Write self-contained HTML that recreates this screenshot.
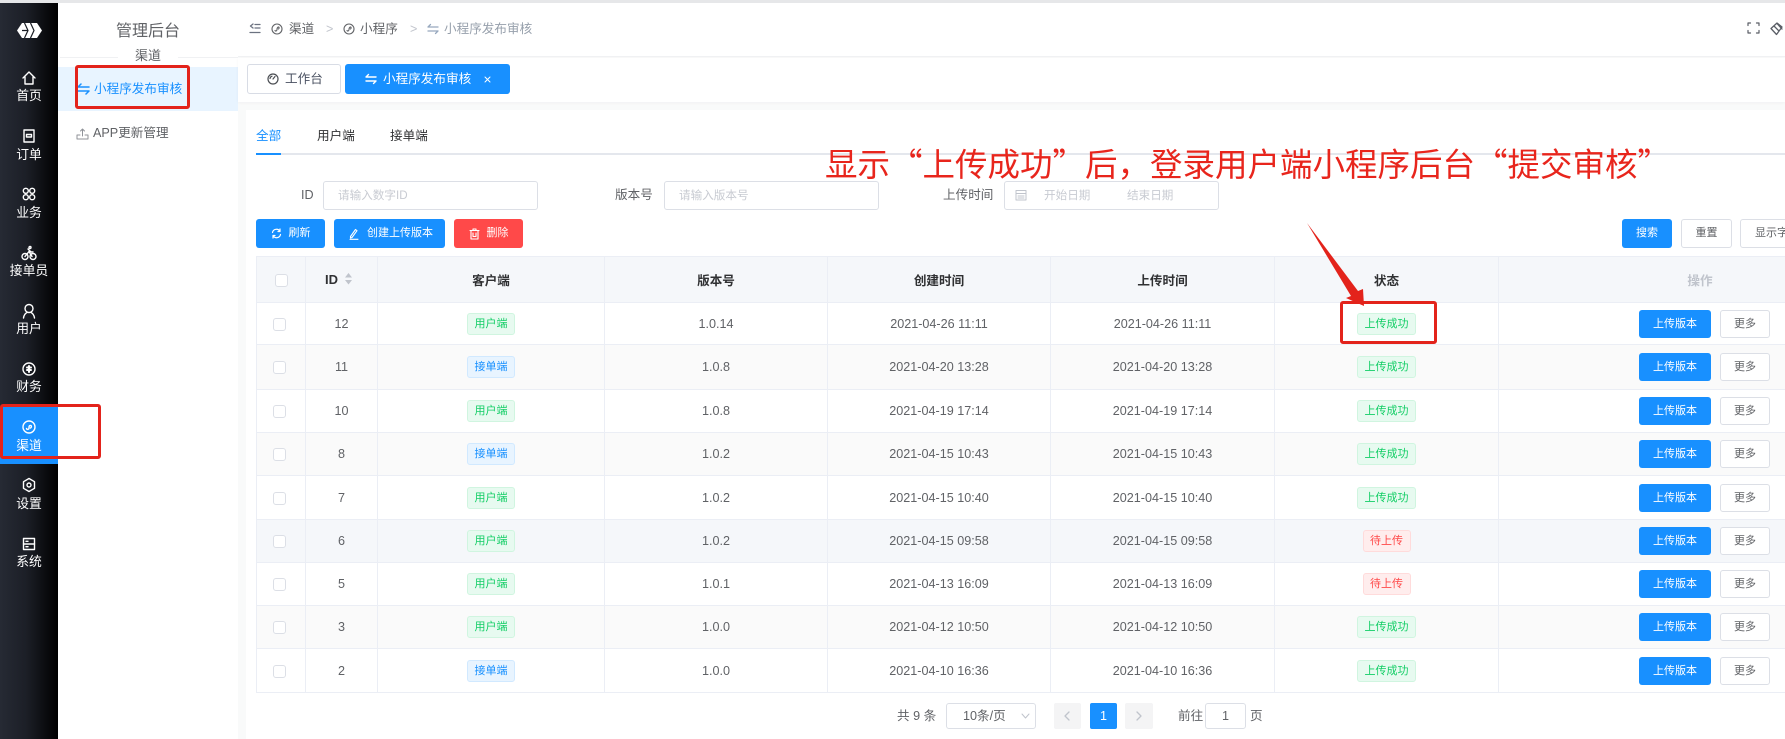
<!DOCTYPE html>
<html lang="zh-CN">
<head>
<meta charset="utf-8">
<title>小程序发布审核</title>
<style>
*{box-sizing:border-box}
html,body{margin:0;padding:0;width:1785px;height:739px;overflow:hidden;background:#fff}
body{position:relative;font-family:"Liberation Sans","Noto Sans CJK SC",sans-serif;font-size:12.6px;color:#606266}
.a{position:absolute}
.t{position:absolute;white-space:nowrap;line-height:20px}
.c{text-align:center}
svg{position:absolute;display:block;fill:none;stroke:currentColor;stroke-linecap:round;stroke-linejoin:round}
#side{left:0;top:3px;width:58px;height:736px;background:linear-gradient(90deg,#262a34 0%,#1c1f27 45%,#000 100%)}
.lbl{position:absolute;left:0;width:58px;text-align:center;color:#fff;font-size:12.8px;line-height:20px}
.ic{color:#fff;left:21px;stroke-width:1.4}
.btn{position:absolute;top:219px;height:29px;border-radius:3px;font-size:11px;line-height:29px;text-align:center;color:#fff;background:#1890ff;white-space:nowrap}
.btn.p{background:#fff;border:1px solid #dcdfe6;color:#606266;line-height:27px}
.inp{position:absolute;top:181px;height:29px;border:1px solid #dcdfe6;border-radius:3px;background:#fff}
.ph{position:absolute;color:#c8cbd2;font-size:11.6px;line-height:20px;white-space:nowrap}
table{position:absolute;left:256px;top:256px;width:1645px;border-collapse:collapse;table-layout:fixed;border-top:1px solid #ebeef5;border-left:1px solid #ebeef5}
th,td{border-right:1px solid #ebeef5;border-bottom:1px solid #ebeef5;padding:0;text-align:center;vertical-align:middle;font-size:12.6px;white-space:nowrap}
th{background:#f5f7fa;color:#303133;font-weight:700;height:46px}
td{color:#606266}
tr.s td{background:#fafafa}
tr.h td{background:#f5f7fa}
.cb{display:inline-block;width:13px;height:13px;border:1px solid #dcdfe6;border-radius:3px;background:#fff;vertical-align:middle;position:relative}
.hc{left:0}
.rc{left:-2px}
.tag{display:inline-block;height:22px;line-height:20px;padding:0 6.5px;border-radius:3px;font-size:11px;border:1px solid;vertical-align:middle}
.g{background:#e7faf0;border-color:#d0f5e0;color:#13ce66}
.b{background:#e8f4ff;border-color:#d1e9ff;color:#1890ff}
.r{background:#ffeded;border-color:#ffdbdb;color:#ff4949}
td.op{text-align:left;padding-left:140px}
.m1,.m2{display:inline-block;height:28px;border-radius:3px;font-size:11px;line-height:28px;text-align:center;vertical-align:middle}
.m1{width:72px;background:#1890ff;color:#fff}
.m2{width:50px;margin-left:9px;background:#fff;border:1px solid #dcdfe6;color:#606266;line-height:26px}
</style>
</head>
<body>
<div class="a" style="left:0;top:0;width:1785px;height:3px;background:#e6e7e9"></div>

<!-- icon rail -->
<div id="side" class="a"></div>
<svg style="left:17px;top:23px" width="25" height="15" viewBox="0 0 25 15">
<path d="M5 0H20L25 7.500L20 15H5L0 7.500Z" fill="#fff" stroke="none"/>
<path d="M7.500 0L11 7.500L7.500 15M13.500 0L17 7.500L13.500 15M11 7.500H5" stroke="#1a1d24" stroke-width="1.2" stroke-linecap="butt"/>
</svg>

<svg class="ic" style="top:70px" width="16" height="16" viewBox="0 0 16 16"><path d="M2 8L8 2L14 8M4 7V14H12V7"/></svg>
<div class="lbl" style="top:86px">首页</div>
<svg class="ic" style="top:128px" width="16" height="16" viewBox="0 0 16 16"><rect x="3" y="2" width="10" height="12"/><path d="M5.500 6.500H10.500V9H5.500Z"/></svg>
<div class="lbl" style="top:145px">订单</div>
<svg class="ic" style="top:186px" width="16" height="16" viewBox="0 0 16 16"><circle cx="4.800" cy="4.800" r="2.500"/><circle cx="11.200" cy="4.800" r="2.500"/><circle cx="4.800" cy="11.200" r="2.500"/><circle cx="11.200" cy="11.200" r="2.500"/></svg>
<div class="lbl" style="top:203px">业务</div>
<svg class="ic" style="top:245px" width="16" height="16" viewBox="0 0 16 16"><circle cx="4" cy="11.500" r="3"/><circle cx="12" cy="11.500" r="3"/><path d="M4 11.500L8 6.500L11 11.500M7 4L10 7H12"/><circle cx="9" cy="2.500" r="1"/></svg>
<div class="lbl" style="top:261px">接单员</div>
<svg class="ic" style="top:303px" width="16" height="16" viewBox="0 0 16 16"><circle cx="8" cy="5.500" r="4"/><path d="M2.500 15C3 11.500 5 10 6 9.500M13.500 15C13 11.500 11 10 10 9.500"/></svg>
<div class="lbl" style="top:319px">用户</div>
<svg class="ic" style="top:361px" width="16" height="16" viewBox="0 0 16 16"><circle cx="8" cy="8" r="6"/><path d="M6 6.500H10M6 9H10M8 5V11" stroke-width="2"/></svg>
<div class="lbl" style="top:377px">财务</div>

<div class="a" style="left:0;top:407px;width:58px;height:57px;background:#1890ff"></div>
<svg class="ic" style="top:419px" width="16" height="16" viewBox="0 0 16 16"><circle cx="8" cy="8" r="6"/><path d="M5.500 9.500C6 11 8 10.500 8 9C8 7.500 8 7 9 6.500C10.500 6 11 8 9.500 9"/></svg>
<div class="lbl" style="top:436px">渠道</div>

<svg class="ic" style="top:477px" width="16" height="16" viewBox="0 0 16 16"><path d="M8 1.500L13.500 4.700V11.300L8 14.500L2.500 11.300V4.700Z"/><circle cx="8" cy="8" r="2"/></svg>
<div class="lbl" style="top:494px">设置</div>
<svg class="ic" style="top:536px" width="16" height="16" viewBox="0 0 16 16"><rect x="2.500" y="2.500" width="11" height="11"/><path d="M2.500 8H13.500M5 5.300H7M5 10.700H7"/></svg>
<div class="lbl" style="top:552px">系统</div>

<!-- second menu -->
<div class="a" style="left:58px;top:3px;width:180px;height:736px;background:#fff"></div>
<div class="a" style="left:60px;top:57px;width:178px;height:1px;background:#f0f1f3"></div>
<div class="t c" style="left:58px;width:180px;top:21px;font-size:16px;line-height:22px;color:#606266">管理后台</div>
<div class="t c" style="left:118px;width:60px;top:46px;font-size:13px;background:#fff;color:#606266">渠道</div>
<div class="a" style="left:58px;top:67px;width:180px;height:44px;background:#e8f4ff"></div>
<svg style="left:77px;top:83px;color:#1890ff;stroke-width:1.5" width="13" height="12" viewBox="0 0 13 12"><path d="M1 4H12M1 4L4 1M12 8H1M12 8L9 11"/></svg>
<div class="t" style="left:94px;top:79px;color:#1890ff">小程序发布审核</div>
<svg style="left:76px;top:127px;color:#909399;stroke-width:1" width="13" height="13" viewBox="0 0 13 13"><path d="M1 8V12H12V8H9M1 8H4M6.500 9V2M4.500 4L6.500 2L8.500 4"/></svg>
<div class="t" style="left:93px;top:123px">APP更新管理</div>

<!-- page background -->
<div class="a" style="left:238px;top:3px;width:1547px;height:736px;background:#f9fafa"></div>

<!-- top nav -->
<div class="a" style="left:238px;top:3px;width:1547px;height:54px;background:#fff;border-bottom:1px solid #f0f1f3"></div>
<svg style="left:249px;top:23px;color:#6b7280;stroke-width:1.3" width="12" height="11" viewBox="0 0 12 11"><path d="M4 1L1.500 3L4 5M6 1.500H11M6 5H11M1 9.500H11"/></svg>
<svg style="left:271px;top:23px;color:#606266;stroke-width:1.1" width="12" height="12" viewBox="0 0 12 12"><circle cx="6" cy="6" r="5"/><path d="M4 7.500C4.500 8.500 6 8 6 6.500C6 5 6.500 4.500 7.200 4C8.300 3.800 8.500 5.500 7.500 6"/></svg>
<div class="t" style="left:289px;top:19px;color:#606266">渠道</div>
<div class="t" style="left:326px;top:19px;color:#c0c4cc">&gt;</div>
<svg style="left:343px;top:23px;color:#606266;stroke-width:1.1" width="12" height="12" viewBox="0 0 12 12"><circle cx="6" cy="6" r="5"/><path d="M4 7.500C4.500 8.500 6 8 6 6.500C6 5 6.500 4.500 7.200 4C8.300 3.800 8.500 5.500 7.500 6"/></svg>
<div class="t" style="left:360px;top:19px;color:#606266">小程序</div>
<div class="t" style="left:410px;top:19px;color:#c0c4cc">&gt;</div>
<svg style="left:427px;top:23px;color:#97a8be;stroke-width:1.3" width="12" height="12" viewBox="0 0 12 12"><path d="M1 4H11M1 4L3.500 1.500M11 8H1M11 8L8.500 10.500"/></svg>
<div class="t" style="left:444px;top:19px;color:#97a0ac">小程序发布审核</div>
<svg style="left:1747px;top:22px;color:#5a5e66;stroke-width:1.2" width="13" height="12" viewBox="0 0 13 12"><path d="M1 3.500V1H3.500M9.500 1H12V3.500M12 8.500V11H9.500M3.500 11H1V8.500"/></svg>
<svg style="left:1770px;top:22px;color:#5a5e66;stroke-width:1.3" width="13" height="14" viewBox="0 0 13 14"><path d="M1 6.500L7 1L12 5L6.500 12.500ZM4 4L9 9M7 1.500L12 7"/></svg>

<!-- tags bar -->
<div class="a" style="left:238px;top:58px;width:1547px;height:44px;background:#fff;box-shadow:0 1px 3px rgba(0,21,41,.04)"></div>
<div class="a" style="left:247px;top:64px;width:94px;height:30px;background:#fff;border:1px solid #d8dce5;border-radius:3px"></div>
<svg style="left:267px;top:73px;color:#4a4d52;stroke-width:1.2" width="12" height="12" viewBox="0 0 12 12"><circle cx="6" cy="6" r="5"/><path d="M6 6L8 3.500M3 5.500C3.200 4.500 4 3.500 5 3.200"/></svg>
<div class="t" style="left:285px;top:69px;color:#495060">工作台</div>
<div class="a" style="left:345px;top:64px;width:165px;height:30px;background:#1890ff;border-radius:3px"></div>
<svg style="left:365px;top:73px;color:#fff;stroke-width:1.4" width="12" height="12" viewBox="0 0 12 12"><path d="M1 4H11M1 4L3.500 1.500M11 8H1M11 8L8.500 10.500"/></svg>
<div class="t" style="left:383px;top:69px;color:#fff">小程序发布审核</div>
<svg style="left:484px;top:76px;color:#fff;stroke-width:1" width="7" height="7" viewBox="0 0 7 7"><path d="M1 1L6 6M6 1L1 6"/></svg>

<!-- card -->
<div class="a" style="left:246px;top:110px;width:1539px;height:629px;background:#fff"></div>

<!-- tabs -->
<div class="t" style="left:256px;top:126px;color:#1890ff">全部</div>
<div class="t" style="left:317px;top:126px;color:#303133">用户端</div>
<div class="t" style="left:390px;top:126px;color:#303133">接单端</div>
<div class="a" style="left:256px;top:153px;width:1529px;height:2px;background:#e4e7ed"></div>
<div class="a" style="left:256px;top:153px;width:25px;height:2px;background:#1890ff"></div>

<!-- search form -->
<div class="t" style="left:301px;top:185px;color:#606266">ID</div>
<div class="inp" style="left:323px;width:215px"></div>
<div class="ph" style="left:338px;top:186px">请输入数字ID</div>
<div class="t" style="left:615px;top:185px">版本号</div>
<div class="inp" style="left:664px;width:215px"></div>
<div class="ph" style="left:679px;top:186px">请输入版本号</div>
<div class="t" style="left:943px;top:185px">上传时间</div>
<div class="inp" style="left:1004px;width:215px"></div>
<svg style="left:1015px;top:189px;color:#c0c4cc;stroke-width:1" width="12" height="12" viewBox="0 0 12 12"><rect x="1" y="1.500" width="10" height="9.500"/><path d="M1 4.500H11M3 7H9M3 9H9"/></svg>
<div class="ph" style="left:1044px;top:186px">开始日期</div>
<div class="ph" style="left:1127px;top:186px">结束日期</div>

<!-- toolbar -->
<div class="btn" style="left:256px;width:69px;padding-left:18px">刷新</div>
<svg style="left:271px;top:228px;color:#fff;stroke-width:1.2" width="11" height="11" viewBox="0 0 11 11"><path d="M1.500 4.500A4 4 0 0 1 9 3.500M9.500 6.500A4 4 0 0 1 2 7.500M9 1V3.500H7M2 10V7.500H4"/></svg>
<div class="btn" style="left:334px;width:111px;padding-left:21px">创建上传版本</div>
<svg style="left:348px;top:228px;color:#fff;stroke-width:1.1" width="12" height="12" viewBox="0 0 12 12"><path d="M2.500 8.500L7.500 1.500L9 2.700L4 9.500L2.500 10ZM2 11.300H10"/></svg>
<div class="btn" style="left:454px;width:69px;padding-left:18px;background:#ff4949">删除</div>
<svg style="left:469px;top:228px;color:#fff;stroke-width:1.1" width="11" height="12" viewBox="0 0 11 12"><path d="M1 2.500H10M4 2.500V1H7V2.500M2 2.500V11H9V2.500M4 5V8.500H7V5"/></svg>
<div class="btn" style="left:1622px;width:50px">搜索</div>
<div class="btn p" style="left:1681px;width:51px">重置</div>
<div class="btn p" style="left:1740px;width:74px">显示字段</div>

<!-- table -->
<table>
<colgroup><col style="width:49px"><col style="width:72px"><col style="width:227px"><col style="width:223px"><col style="width:223px"><col style="width:224px"><col style="width:224px"><col style="width:403px"></colgroup>
<tr><th><span class="cb hc"></span></th><th style="text-align:left;padding-left:19px;font-size:13px">ID</th><th>客户端</th><th>版本号</th><th>创建时间</th><th>上传时间</th><th>状态</th><th style="color:#c0c4cc">操作</th></tr>
<tr style="height:42px"><td><span class="cb rc"></span></td><td>12</td><td><span class="tag g">用户端</span></td><td>1.0.14</td><td>2021-04-26 11:11</td><td>2021-04-26 11:11</td><td><span class="tag g">上传成功</span></td><td class="op"><span class="m1">上传版本</span><span class="m2">更多</span></td></tr>
<tr class="s" style="height:45px"><td><span class="cb rc"></span></td><td>11</td><td><span class="tag b">接单端</span></td><td>1.0.8</td><td>2021-04-20 13:28</td><td>2021-04-20 13:28</td><td><span class="tag g">上传成功</span></td><td class="op"><span class="m1">上传版本</span><span class="m2">更多</span></td></tr>
<tr style="height:43px"><td><span class="cb rc"></span></td><td>10</td><td><span class="tag g">用户端</span></td><td>1.0.8</td><td>2021-04-19 17:14</td><td>2021-04-19 17:14</td><td><span class="tag g">上传成功</span></td><td class="op"><span class="m1">上传版本</span><span class="m2">更多</span></td></tr>
<tr class="s" style="height:43px"><td><span class="cb rc"></span></td><td>8</td><td><span class="tag b">接单端</span></td><td>1.0.2</td><td>2021-04-15 10:43</td><td>2021-04-15 10:43</td><td><span class="tag g">上传成功</span></td><td class="op"><span class="m1">上传版本</span><span class="m2">更多</span></td></tr>
<tr style="height:44px"><td><span class="cb rc"></span></td><td>7</td><td><span class="tag g">用户端</span></td><td>1.0.2</td><td>2021-04-15 10:40</td><td>2021-04-15 10:40</td><td><span class="tag g">上传成功</span></td><td class="op"><span class="m1">上传版本</span><span class="m2">更多</span></td></tr>
<tr class="h" style="height:43px"><td><span class="cb rc"></span></td><td>6</td><td><span class="tag g">用户端</span></td><td>1.0.2</td><td>2021-04-15 09:58</td><td>2021-04-15 09:58</td><td><span class="tag r">待上传</span></td><td class="op"><span class="m1">上传版本</span><span class="m2">更多</span></td></tr>
<tr style="height:43px"><td><span class="cb rc"></span></td><td>5</td><td><span class="tag g">用户端</span></td><td>1.0.1</td><td>2021-04-13 16:09</td><td>2021-04-13 16:09</td><td><span class="tag r">待上传</span></td><td class="op"><span class="m1">上传版本</span><span class="m2">更多</span></td></tr>
<tr class="s" style="height:43px"><td><span class="cb rc"></span></td><td>3</td><td><span class="tag g">用户端</span></td><td>1.0.0</td><td>2021-04-12 10:50</td><td>2021-04-12 10:50</td><td><span class="tag g">上传成功</span></td><td class="op"><span class="m1">上传版本</span><span class="m2">更多</span></td></tr>
<tr style="height:44px"><td><span class="cb rc"></span></td><td>2</td><td><span class="tag b">接单端</span></td><td>1.0.0</td><td>2021-04-10 16:36</td><td>2021-04-10 16:36</td><td><span class="tag g">上传成功</span></td><td class="op"><span class="m1">上传版本</span><span class="m2">更多</span></td></tr>
</table>
<svg style="left:344px;top:272px;stroke:none;fill:#c0c4cc" width="9" height="14" viewBox="0 0 9 14"><path d="M4.500 1L8 5.500H1ZM1 8H8L4.500 12.500Z"/></svg>

<!-- pagination -->
<div class="t" style="left:897px;top:706px">共 9 条</div>
<div class="a" style="left:946px;top:703px;width:90px;height:26px;border:1px solid #dcdfe6;border-radius:3px"></div>
<div class="t" style="left:963px;top:706px">10条/页</div>
<svg style="left:1021px;top:713px;color:#c0c4cc;stroke-width:1" width="9" height="6" viewBox="0 0 9 6"><path d="M1 1L4.500 5L8 1"/></svg>
<div class="a" style="left:1054px;top:703px;width:27px;height:26px;background:#f4f4f5;border-radius:2px"></div>
<svg style="left:1064px;top:711px;color:#c0c4cc;stroke-width:1.300" width="6" height="10" viewBox="0 0 6 10"><path d="M5 1L1 5L5 9"/></svg>
<div class="a" style="left:1090px;top:703px;width:27px;height:26px;background:#1890ff;border-radius:2px;color:#fff;text-align:center;line-height:26px">1</div>
<div class="a" style="left:1125px;top:703px;width:28px;height:26px;background:#f4f4f5;border-radius:2px"></div>
<svg style="left:1136px;top:711px;color:#c0c4cc;stroke-width:1.300" width="6" height="10" viewBox="0 0 6 10"><path d="M1 1L5 5L1 9"/></svg>
<div class="t" style="left:1178px;top:706px">前往</div>
<div class="a" style="left:1205px;top:703px;width:41px;height:26px;border:1px solid #dcdfe6;border-radius:3px;text-align:center;line-height:24px">1</div>
<div class="t" style="left:1250px;top:706px">页</div>

<!-- annotations -->
<div class="a" style="left:0;top:404px;width:101px;height:55px;border:3px solid #e3231b;border-radius:3px"></div>
<div class="a" style="left:75px;top:65px;width:115px;height:44px;border:3px solid #e3231b;border-radius:3px"></div>
<div class="a" style="left:1340px;top:301px;width:97px;height:43px;border:3px solid #e3231b;border-radius:3px"></div>
<svg style="left:1300px;top:220px;stroke:none;fill:#e3231b" width="70" height="92" viewBox="0 0 70 92"><path d="M7 3L58 71L63 69L64 86L46 78L51 76Z"/></svg>
<div class="t" style="left:825px;top:140px;font-family:'Noto Sans CJK SC',sans-serif;font-size:32.5px;line-height:46px;color:#e8251c;font-weight:400">显示“上传成功”后，登录用户端小程序后台“提交审核”</div>
</body>
</html>
